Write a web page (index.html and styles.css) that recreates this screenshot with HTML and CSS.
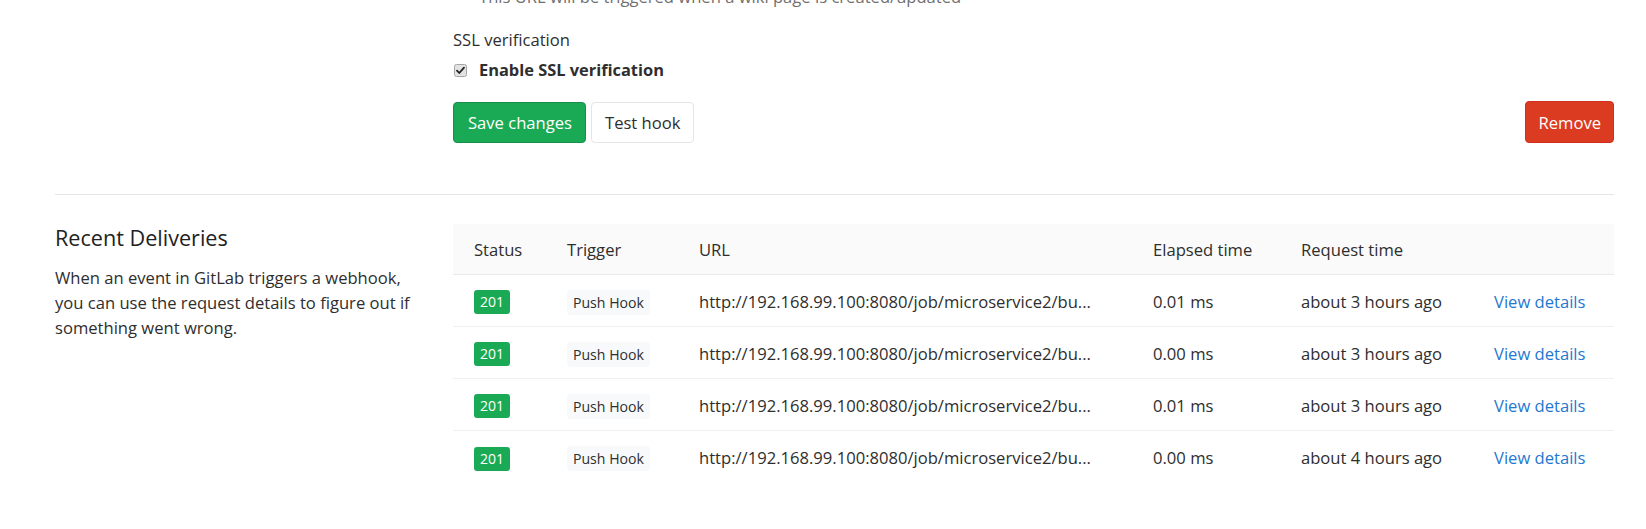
FILE: index.html
```html
<!DOCTYPE html>
<html>
<head>
<meta charset="utf-8">
<link rel="stylesheet" href="styles.css">
</head>
<body>
<div class="page">
  <section class="settings-row top-row">
    <div class="side"></div>
    <div class="main">
      <p class="help-text">This URL will be triggered when a wiki page is created/updated</p>
      <div class="form-group">
        <div class="label">SSL verification</div>
        <label class="check">
          <svg class="checkbox" width="13" height="13" viewBox="0 0 13 13" aria-hidden="true">
            <rect x="0.5" y="0.5" width="12" height="12" rx="2" fill="#e3e3e3" stroke="#a5a5a5"/>
            <path d="M3 6.6 L5.3 9 L10 3.6" fill="none" stroke="#222" stroke-width="1.8" stroke-linecap="round" stroke-linejoin="round"/>
          </svg>
          <span class="check-text">Enable SSL verification</span>
        </label>
      </div>
      <div class="actions">
        <div class="actions-left">
          <button class="btn btn-success">Save changes</button>
          <button class="btn btn-default">Test hook</button>
        </div>
        <button class="btn btn-danger">Remove</button>
      </div>
    </div>
  </section>

  <hr class="divider">

  <section class="settings-row deliveries">
    <div class="side">
      <h4 class="side-title">Recent Deliveries</h4>
      <p class="side-text">When an event in GitLab triggers a webhook, you can use the request details to figure out if something went wrong.</p>
    </div>
    <div class="main">
      <table class="table">
        <colgroup>
          <col class="c-status"><col class="c-trigger"><col class="c-url"><col class="c-elapsed"><col class="c-req"><col class="c-act">
        </colgroup>
        <thead>
          <tr><th>Status</th><th>Trigger</th><th>URL</th><th>Elapsed time</th><th>Request time</th><th></th></tr>
        </thead>
        <tbody>
          <tr>
            <td><span class="badge-ok">201</span></td>
            <td><span class="pill">Push Hook</span></td>
            <td>http://192.168.99.100:8080/job/microservice2/bu...</td>
            <td>0.01 ms</td>
            <td>about 3 hours ago</td>
            <td><a class="link" href="#">View details</a></td>
          </tr>
          <tr>
            <td><span class="badge-ok">201</span></td>
            <td><span class="pill">Push Hook</span></td>
            <td>http://192.168.99.100:8080/job/microservice2/bu...</td>
            <td>0.00 ms</td>
            <td>about 3 hours ago</td>
            <td><a class="link" href="#">View details</a></td>
          </tr>
          <tr>
            <td><span class="badge-ok">201</span></td>
            <td><span class="pill">Push Hook</span></td>
            <td>http://192.168.99.100:8080/job/microservice2/bu...</td>
            <td>0.01 ms</td>
            <td>about 3 hours ago</td>
            <td><a class="link" href="#">View details</a></td>
          </tr>
          <tr>
            <td><span class="badge-ok">201</span></td>
            <td><span class="pill">Push Hook</span></td>
            <td>http://192.168.99.100:8080/job/microservice2/bu...</td>
            <td>0.00 ms</td>
            <td>about 4 hours ago</td>
            <td><a class="link" href="#">View details</a></td>
          </tr>
        </tbody>
      </table>
    </div>
  </section>
</div>
</body>
</html>
```
FILE: styles.css
```css
* { box-sizing: border-box; }

html, body {
  margin: 0;
  padding: 0;
  background: #fff;
}

body {
  font-family: "Open Sans", "Noto Sans", sans-serif;
  font-size: 16.6px;
  line-height: 25px;
  color: #2e2e2e;
  overflow: hidden;
}

.page {
  padding: 0 32px 0 55px;
  margin-top: -16px;
}

.settings-row {
  display: grid;
  grid-template-columns: 360px 1fr;
  column-gap: 38px;
}

.help-text {
  margin: 0 0 18px 26px;
  color: #707070;
}

.form-group {
  margin: 0;
}

.label {
  font-weight: 500;
  margin-bottom: 5px;
}

.check {
  display: flex;
  align-items: center;
  gap: 12px;
  padding-left: 1px;
}

.checkbox {
  display: block;
  flex: none;
  margin-top: 1px;
}

.check-text {
  font-weight: 700;
  font-size: 16.4px;
}

.actions {
  display: flex;
  justify-content: space-between;
  align-items: center;
  margin-top: 19px;
}

.actions-left {
  display: flex;
  gap: 5px;
}

.btn {
  font-family: inherit;
  font-size: 16.6px;
  line-height: 25px;
  height: 41px;
  padding: 7px 13px;
  border-radius: 4px;
  border: 1px solid #e5e5e5;
  background: #fff;
  color: #2e2e2e;
  margin: 0;
  cursor: pointer;
}

.btn-success {
  background: #1aaa55;
  border-color: #168f48;
  color: #fff;
  padding: 7px 13px 7px 14px;
}

.btn-default {
  padding: 7px 13px;
}

.btn-danger {
  background: #db3b21;
  border-color: #d22d1d;
  color: #fff;
  height: 42px;
  padding: 7px 12px;
}

.divider {
  border: 0;
  border-top: 1px solid #e5e5e5;
  margin: 51px 0 0;
  height: 0;
}

.deliveries {
  padding-top: 29px;
}

.side-title {
  font-size: 21.6px;
  line-height: 30px;
  font-weight: 400;
  margin: -1px 0 12px;
  color: #222;
}

.side-text {
  margin: 0;
}

.table {
  width: 100%;
  border-collapse: collapse;
  table-layout: fixed;
}

.c-status { width: 93px; }
.c-trigger { width: 132px; }
.c-url { width: 454px; }
.c-elapsed { width: 148px; }
.c-req { width: 193px; }

.table th {
  background: #fafafa;
  font-weight: 400;
  text-align: left;
  padding: 13px 21px 12px;
  border-bottom: 1px solid #e8e8e8;
  white-space: nowrap;
}

.table td {
  height: 52px;
  padding: 2px 21px 0;
  border-bottom: 1px solid #f0f0f0;
  white-space: nowrap;
  vertical-align: middle;
}

.table tbody tr:last-child td {
  border-bottom: 0;
}

.badge-ok {
  display: inline-block;
  vertical-align: middle;
  background: #1aaa55;
  color: #fff;
  font-size: 14px;
  line-height: 24px;
  padding: 0 6px;
  border-radius: 3px;
  margin-top: -2px;
}

.pill {
  display: inline-block;
  vertical-align: middle;
  background: #f8f9fa;
  color: #2e2e2e;
  font-size: 14.1px;
  line-height: 25px;
  padding: 0 6px;
  border-radius: 3px;
  margin-top: -2px;
}

.link {
  color: #1f78d1;
  text-decoration: none;
}
```
